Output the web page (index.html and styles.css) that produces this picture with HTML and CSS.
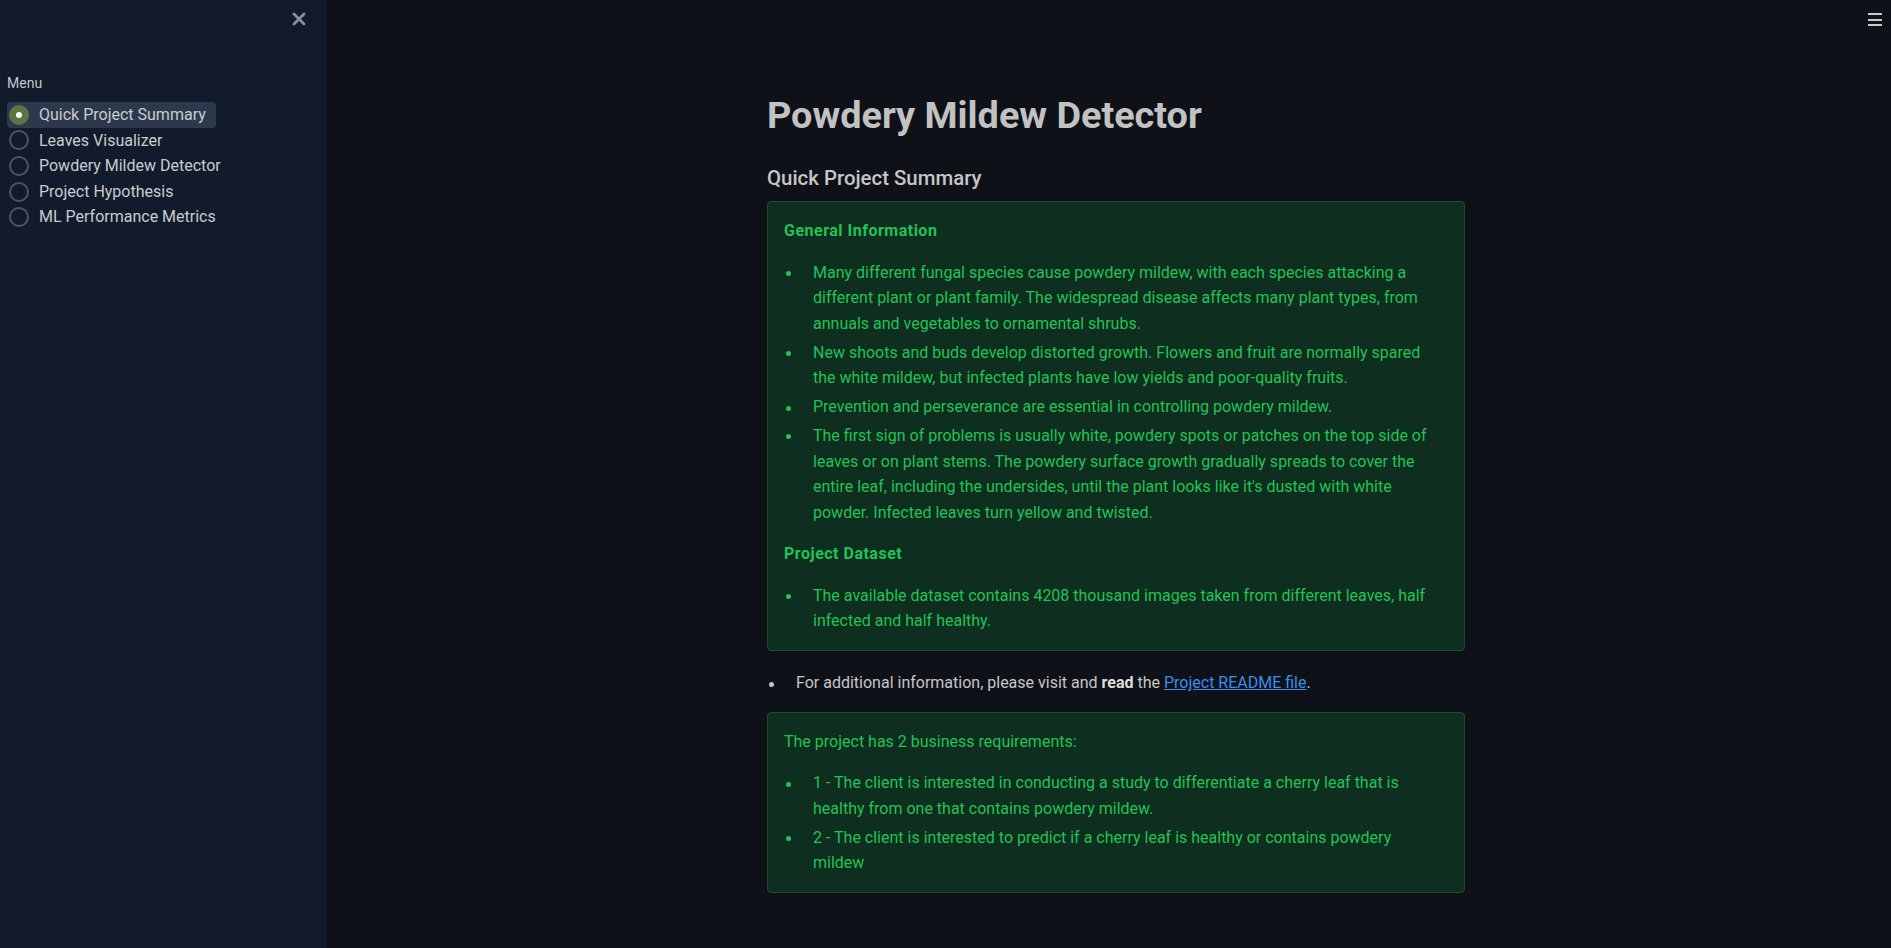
FILE: index.html
```html
<!DOCTYPE html>
<html lang="en">
<head>
<meta charset="utf-8">
<title>Powdery Mildew Detector</title>
<link rel="stylesheet" href="styles.css">
</head>
<body>
<aside class="sidebar">
  <div class="sidebar-head">
    <svg class="close-icon" width="14" height="14" viewBox="0 0 14 14" aria-hidden="true">
      <path d="M2 2 L12 12 M12 2 L2 12" stroke="#8c9099" stroke-width="2.8" stroke-linecap="round" fill="none"/>
    </svg>
  </div>
  <div class="menu-label">Menu</div>
  <div class="radio-group">
    <div class="radio-row selected"><span class="radio-dot"></span><span class="radio-text">Quick Project Summary</span></div>
    <div class="radio-row"><span class="radio-dot"></span><span class="radio-text">Leaves Visualizer</span></div>
    <div class="radio-row"><span class="radio-dot"></span><span class="radio-text">Powdery Mildew Detector</span></div>
    <div class="radio-row"><span class="radio-dot"></span><span class="radio-text">Project Hypothesis</span></div>
    <div class="radio-row"><span class="radio-dot"></span><span class="radio-text">ML Performance Metrics</span></div>
  </div>
</aside>
<main class="main">
  <div class="toolbar">
    <span class="hamburger"><span></span><span></span><span></span></span>
  </div>
  <div class="content">
    <h1 class="title">Powdery Mildew Detector</h1>
    <h3 class="subtitle">Quick Project Summary</h3>
    <div class="alert">
      <p class="alert-head">General Information</p>
      <ul class="list">
        <li><span>Many different fungal species cause powdery mildew, with each species attacking a different plant or plant family. The widespread disease affects many plant types, from annuals and vegetables to ornamental shrubs.</span></li>
        <li><span>New shoots and buds develop distorted growth. Flowers and fruit are normally spared the white mildew, but infected plants have low yields and poor-quality fruits.</span></li>
        <li><span>Prevention and perseverance are essential in controlling powdery mildew.</span></li>
        <li><span>The first sign of problems is usually white, powdery spots or patches on the top side of leaves or on plant stems. The powdery surface growth gradually spreads to cover the entire leaf, including the undersides, until the plant looks like it's dusted with white powder. Infected leaves turn yellow and twisted.</span></li>
      </ul>
      <p class="alert-head">Project Dataset</p>
      <ul class="list">
        <li><span>The available dataset contains 4208 thousand images taken from different leaves, half infected and half healthy.</span></li>
      </ul>
    </div>
    <div class="block">
      <ul class="list plain-list">
        <li><span>For additional information, please visit and <strong>read</strong> the <a href="#">Project README file</a>.</span></li>
      </ul>
    </div>
    <div class="alert">
      <p class="alert-text">The project has 2 business requirements:</p>
      <ul class="list">
        <li><span>1 - The client is interested in conducting a study to differentiate a cherry leaf that is healthy from one that contains powdery mildew.</span></li>
        <li><span>2 - The client is interested to predict if a cherry leaf is healthy or contains powdery mildew</span></li>
      </ul>
    </div>
  </div>
</main>
</body>
</html>
```
FILE: styles.css
```css
* { box-sizing: border-box; }

html, body {
  margin: 0;
  height: 100%;
}

body {
  display: flex;
  background: #0e1117;
  color: #c6c6c6;
  font-family: Roboto, "Liberation Sans", Arial, sans-serif;
  font-size: 16px;
  line-height: 1.6;
  overflow: hidden;
}

/* ---------- sidebar ---------- */
.sidebar {
  width: 327px;
  flex: 0 0 327px;
  height: 100vh;
  background: #111b2b;
  padding: 0 6px;
}

.sidebar-head {
  display: flex;
  justify-content: flex-end;
  padding: 12px 15px 0 0;
  height: 73px;
}

.close-icon {
  display: block;
}

.menu-label {
  font-size: 14px;
  line-height: 20px;
  color: #c4c6ca;
  margin-bottom: 9px;
  padding-left: 1px;
}

.radio-group {
  display: flex;
  flex-direction: column;
}

.radio-row {
  display: flex;
  align-items: center;
  width: fit-content;
  height: 25.6px;
  margin-left: 1px;
  padding: 0 10px 0 2px;
  border-radius: 4px;
  color: #c9cbcf;
}

.radio-row.selected {
  background: #2c394d;
}

.radio-dot {
  width: 20px;
  height: 20px;
  flex: 0 0 20px;
  border-radius: 50%;
  border: 2px solid #4e5461;
  margin-right: 10px;
  display: flex;
  align-items: center;
  justify-content: center;
}

.radio-row.selected .radio-dot {
  background: #5a7741;
  border-color: #5a7741;
}

.radio-row.selected .radio-dot::after {
  content: "";
  width: 6px;
  height: 6px;
  border-radius: 50%;
  background: #ffffff;
}

.radio-text {
  white-space: nowrap;
}

/* ---------- main ---------- */
.main {
  flex: 1;
  height: 100vh;
  display: flex;
  justify-content: center;
  padding-left: 14px;
  position: relative;
}

.toolbar {
  position: absolute;
  top: 13px;
  right: 9px;
}

.hamburger {
  display: flex;
  flex-direction: column;
  gap: 3.5px;
  width: 14px;
}

.hamburger span {
  display: block;
  height: 2px;
  background: #c8c8c8;
}

.content {
  width: 698px;
  padding-top: 93px;
  display: flex;
  flex-direction: column;
}

.title {
  margin: 0 0 27px;
  font-size: 37.8px;
  line-height: 45.6px;
  font-weight: 700;
  color: #c2c2c2;
}

.subtitle {
  margin: 0 0 11px;
  font-size: 20.4px;
  line-height: 24.6px;
  font-weight: 500;
  color: #c6c6c6;
}

.alert {
  background: #0e2e1f;
  border: 1px solid #154f2c;
  border-radius: 4px;
  padding: 16px 20px 16px 16px;
  color: #21c354;
  margin-bottom: 16px;
}

.alert p {
  margin: 0 0 16px;
}

.alert-head {
  font-weight: 700;
  letter-spacing: 0.5px;
}

.list {
  margin: 0 0 16px;
  padding-left: 29px;
  list-style: none;
}

.alert .list:last-child {
  margin-bottom: 0;
}

.list li {
  display: flex;
  margin: 3.2px 0;
}

.list li:last-child {
  margin-bottom: 0;
}

.list li::before {
  content: "";
  flex: 0 0 5px;
  width: 5px;
  height: 5px;
  border-radius: 50%;
  background: currentColor;
  margin: 11.5px 22px 0 -27px;
}

.block {
  margin-bottom: 15.8px;
}

.plain-list {
  margin: 0;
}

.plain-list li {
  margin: 3.2px 0 0;
}

.plain-list strong {
  font-weight: 700;
  color: #dedede;
}

.plain-list a {
  color: #3b8ded;
  text-decoration: underline;
}
```
